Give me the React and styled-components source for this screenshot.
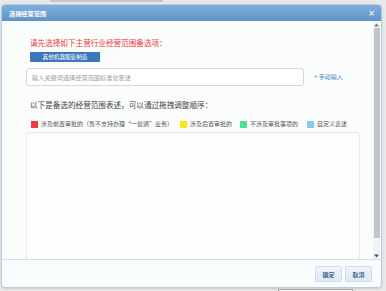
import React from "react";
import styled, { createGlobalStyle } from "styled-components";

const Global = createGlobalStyle`
  html, body { margin: 0; padding: 0; }
  body {
    background: #e4e6e8;
    font-family: "Noto Sans CJK SC", "Noto Sans", sans-serif;
    width: 386px; height: 291px; overflow: hidden;
  }
`;

const Page = styled.div`
  width: 386px;
  height: 291px;
  display: flex;
  flex-direction: column;
  background: #e6e8ea;
`;

const TopStrip = styled.div`
  height: 4px;
  display: flex;
  align-items: flex-start;
  padding-left: 50px;
`;

const HThumb = styled.div`
  width: 113px;
  height: 2px;
  background: #c4c6c8;
`;

const Dialog = styled.div`
  margin-left: 1px;
  width: 379px;
  height: 282px;
  border: 1px solid #b5cde3;
  border-radius: 4px;
  background: #fbfdfd;
  display: flex;
  flex-direction: column;
  overflow: hidden;
  box-shadow: 0 1px 2px rgba(0,0,0,0.12);
`;

const TitleBar = styled.div`
  height: 16px;
  flex: none;
  background: linear-gradient(#80afdc, #5f93c8);
  display: flex;
  align-items: center;
  justify-content: space-between;
  padding: 0 6px 0 7px;
  color: #fff;
  font-size: 6.2px;
  font-weight: bold;
`;

const Close = styled.span`
  font-size: 8px;
  color: #e4eef8;
  font-family: "DejaVu Sans", sans-serif;
`;

const Middle = styled.div`
  height: 238px;
  flex: none;
  display: flex;
`;

const Content = styled.div`
  flex: 1;
  overflow: hidden;
  padding: 17px 14px 0 24px;
  display: flex;
  flex-direction: column;
`;

const Heading = styled.div`
  color: #ee3b35;
  font-size: 7.6px;
  line-height: 10px;
  padding-left: 4px;
`;

const TagButton = styled.div`
  margin: 4px 0 0 4px;
  width: 70px;
  height: 10px;
  background: #3a78bb;
  color: #fff;
  font-size: 5.6px;
  line-height: 10px;
  text-align: center;
  border-radius: 1px;
`;

const InputRow = styled.div`
  margin-top: 6px;
  display: flex;
  align-items: center;
  gap: 10px;
`;

const Input = styled.div`
  width: 271px;
  height: 16px;
  border: 1px solid #d4d7da;
  border-radius: 3px;
  background: #fff;
  color: #9a9ea2;
  font-size: 6.2px;
  display: flex;
  align-items: center;
  padding-left: 5px;
`;

const Manual = styled.div`
  color: #4a86c4;
  font-size: 6px;
  margin-top: -2px;
`;

const SubHead = styled.div`
  margin-top: 14px;
  padding-left: 4px;
  color: #444;
  font-size: 7.6px;
  line-height: 10px;
`;

const Legend = styled.div`
  margin-top: 10px;
  padding-left: 5px;
  display: flex;
  align-items: center;
  font-size: 6px;
  color: #555;
  line-height: 8px;
`;

const LegendItem = styled.div`
  display: flex;
  align-items: center;
  gap: 3px;
  margin-right: ${(p) => p.$gap}px;
`;

const Swatch = styled.span`
  width: 7px;
  height: 7px;
  background: ${(p) => p.$c};
  display: inline-block;
`;

const Box = styled.div`
  margin-top: 4px;
  width: 332px;
  height: 140px;
  flex: none;
  border: 1px solid #e6eaee;
  border-radius: 3px;
  background: #fcfefe;
`;

const ScrollBar = styled.div`
  width: 7px;
  flex: none;
  margin-right: 1px;
  display: flex;
  flex-direction: column;
  align-items: center;
  background: #f2f3f4;
`;

const Arrow = styled.div`
  height: 7px;
  display: flex;
  align-items: center;
  justify-content: center;
  flex: none;
`;

const Thumb = styled.div`
  width: 6px;
  height: 210px;
  background: #c2c4c6;
  flex: none;
`;

const Track = styled.div`
  flex: 1;
`;

const Footer = styled.div`
  flex: 1;
  border-top: 1px solid #cfe0ec;
  display: flex;
  justify-content: flex-end;
  align-items: flex-start;
  padding: 6px 9px 0 0;
  gap: 3px;
`;

const FootBtn = styled.div`
  width: 25px;
  height: 14px;
  border: 1px solid #cbdcea;
  border-radius: 2px;
  background: linear-gradient(#eef5fb, #deeaf5);
  color: #3d6890;
  font-size: 6px;
  font-weight: bold;
  display: flex;
  align-items: center;
  justify-content: center;
`;

const BottomStrip = styled.div`
  flex: 1;
  display: flex;
  padding: 1px 0 0 278px;
`;

const BehindBox = styled.div`
  width: 73px;
  border: 1px solid #a8aaac;
  border-bottom: none;
  background: #f4f4f4;
`;

const UpArrow = () => (
  <svg width="5" height="4" viewBox="0 0 5 4">
    <path d="M0 3.5 L2.5 0.5 L5 3.5 Z" fill="#7a7c7e" />
  </svg>
);
const DownArrow = () => (
  <svg width="5" height="4" viewBox="0 0 5 4">
    <path d="M0 0.5 L2.5 3.5 L5 0.5 Z" fill="#505254" />
  </svg>
);

const legend = [
  { c: "#ef3b3b", t: "涉及前置审批的（暂不支持办理“一窗通”业务）", g: 7 },
  { c: "#f6ea1c", t: "涉及后置审批的", g: 8 },
  { c: "#4fe28a", t: "不涉及审批事项的", g: 9 },
  { c: "#86c6f4", t: "自定义表述", g: 0 },
];

export default function App() {
  return (
    <Page>
      <Global />
      <TopStrip>
        <HThumb />
      </TopStrip>
      <Dialog>
        <TitleBar>
          <span>选择经营范围</span>
          <Close>×</Close>
        </TitleBar>
        <Middle>
          <Content>
            <Heading>请先选择如下主营行业经营范围备选项：</Heading>
            <TagButton>其他机器服装制造</TagButton>
            <InputRow>
              <Input>输入关键词选择经营范围标准化表述</Input>
              <Manual>+ 手动输入</Manual>
            </InputRow>
            <SubHead>以下是备选的经营范围表述，可以通过拖拽调整顺序：</SubHead>
            <Legend>
              {legend.map((l) => (
                <LegendItem key={l.t} $gap={l.g}>
                  <Swatch $c={l.c} />
                  <span>{l.t}</span>
                </LegendItem>
              ))}
            </Legend>
            <Box />
          </Content>
          <ScrollBar>
            <Arrow>
              <UpArrow />
            </Arrow>
            <Thumb />
            <Track />
            <Arrow>
              <DownArrow />
            </Arrow>
          </ScrollBar>
        </Middle>
        <Footer>
          <FootBtn>确定</FootBtn>
          <FootBtn>取消</FootBtn>
        </Footer>
      </Dialog>
      <BottomStrip>
        <BehindBox />
      </BottomStrip>
    </Page>
  );
}
